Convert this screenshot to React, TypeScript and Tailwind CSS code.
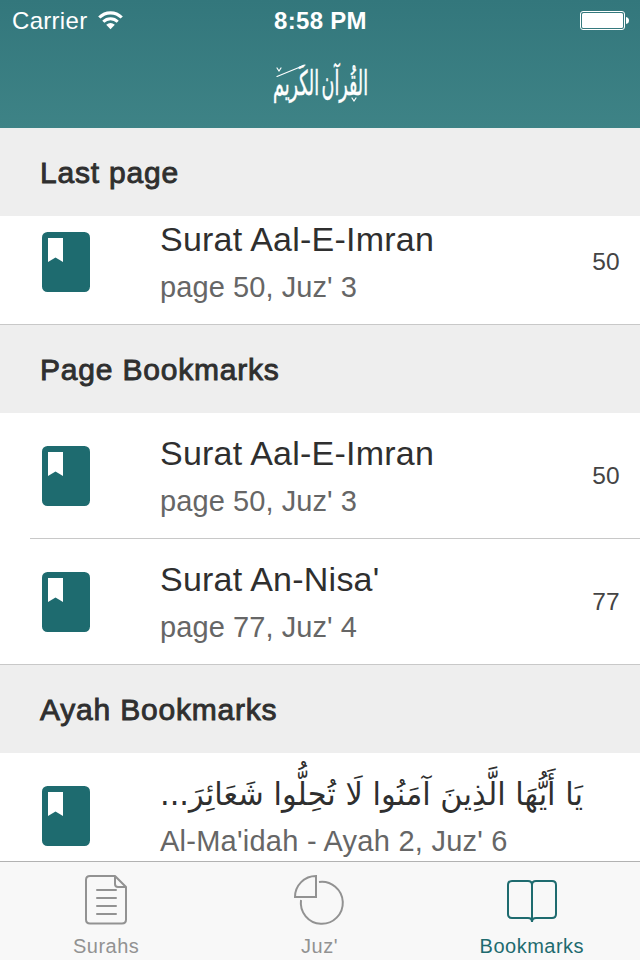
import type { ReactNode } from "react";

const SANS = "font-['Liberation_Sans',Arial,sans-serif]";

function StatusBar() {
  return (
    <div className="flex h-10 items-center justify-between pl-3 pr-[11px]">
      <div className="flex w-[200px] items-center gap-[11px]">
        <span className="pt-0.5 text-[24px] leading-[40px] tracking-[0.3px]">Carrier</span>
        <svg width="25" height="19" viewBox="0 0 25 19" fill="none" stroke="white">
          <path d="M1.3 6.5A15.7 15.7 0 0 1 23.7 6.5" strokeWidth="3.2" />
          <path d="M5.3 10.7A10.2 10.2 0 0 1 19.7 10.7" strokeWidth="3" />
          <path d="M8.2 13.8Q12.5 10.2 16.8 13.8L12.5 18.2Z" fill="white" stroke="none" />
        </svg>
      </div>
      <span className="pt-0.5 text-[24px] font-bold leading-[40px] tracking-[0.3px]">8:58 PM</span>
      <div className="flex w-[200px] justify-end">
        <svg width="49" height="19" viewBox="0 0 49 19" fill="none">
          <rect x="0.5" y="0.5" width="44" height="18" rx="2.5" stroke="white" />
          <rect x="2" y="2" width="41" height="15" rx="1.5" fill="white" />
          <path d="M46 6Q49 6.500 49 9.500Q49 12.500 46 13Z" fill="white" />
        </svg>
      </div>
    </div>
  );
}

function NavTitle() {
  return (
    <div className="flex h-[88px] justify-center">
      <svg width="120" height="72" viewBox="0 0 120 72" className="mt-[15px] overflow-visible" fill="white">
        <text
          x="108"
          y="40"
          direction="rtl"
          textLength="95"
          lengthAdjust="spacingAndGlyphs"
          wordSpacing="-6"
          stroke="white"
          strokeWidth="0.5"
          className="font-['DejaVu_Sans',sans-serif] text-[34px]"
        >
          القُرآن الكَريم
        </text>
        {/* ornamental marks around the lettering */}
        <g fill="none" stroke="white" strokeLinecap="round">
          <path d="M17 21.500L45 10" strokeWidth="1.2" />
          <path d="M17 13L19 16L21 13" strokeWidth="1.2" />
          <path d="M92 43L94 46L96 43" strokeWidth="1.2" />
        </g>
      </svg>
    </div>
  );
}

function SectionHeader({ children }: { children: ReactNode }) {
  return (
    <h2 className="h-[88px] bg-[#eeeeee] pl-10 pt-px text-[30px] font-normal leading-[88px] tracking-[0.8px] text-[#2f2f2f] [-webkit-text-stroke:0.9px_#2f2f2f]">
      {children}
    </h2>
  );
}

function BookIcon() {
  return (
    <svg width="48" height="60" viewBox="0 0 48 60" className="shrink-0">
      <rect width="48" height="60" rx="5.5" fill="#1e6b6f" />
      <path d="M6 6H21V30L13.500 25.500L6 30Z" fill="white" />
    </svg>
  );
}

function Row({ title, detail, page }: { title: string; detail: string; page: string }) {
  return (
    <div className="flex h-[125px] items-center pl-[42px] pr-5">
      <BookIcon />
      <div className="ml-[70px] flex-1">
        <div className="h-12 text-[34px] leading-[50px] tracking-[0.23px] text-[#2f2f2f]">{title}</div>
        <div className="h-12 text-[29px] leading-[51px] tracking-[0.08px] text-[#666666]">{detail}</div>
      </div>
      <span className="pt-0.5 text-[24.5px] tracking-[0.3px] text-[#444444]">{page}</span>
    </div>
  );
}

function Tab({ label, active, children }: { label: string; active?: boolean; children: ReactNode }) {
  return (
    <div className={`flex flex-col items-center ${active ? "pr-[3px] text-[#1e6b6f]" : "pr-px text-[#929292]"}`}>
      <svg width="56" height="56" viewBox="0 0 56 56" fill="none" stroke="currentColor" strokeWidth="2" className="mt-[11px]">
        {children}
      </svg>
      <span className="mt-[3px] text-[20px] leading-[28px] tracking-[0.5px]">{label}</span>
    </div>
  );
}

export default function App() {
  return (
    <div className={`flex h-[960px] w-[640px] flex-col overflow-hidden bg-white ${SANS}`}>
      <header className="h-32 shrink-0 bg-linear-to-b from-[#33777c] to-[#3e8386] text-white">
        <StatusBar />
        <NavTitle />
      </header>

      <main className="h-[733px] shrink-0 overflow-hidden">
        <SectionHeader>Last page</SectionHeader>
        <div className="flex h-[109px] items-end overflow-hidden border-b border-[#c8c8c8]">
          <div className="w-full">
            <Row title="Surat Aal-E-Imran" detail="page 50, Juz' 3" page="50" />
          </div>
        </div>
        <SectionHeader>Page Bookmarks</SectionHeader>
        <Row title="Surat Aal-E-Imran" detail="page 50, Juz' 3" page="50" />
        <div className="ml-[30px] h-px bg-[#c8c8c8]" />
        <Row title="Surat An-Nisa'" detail="page 77, Juz' 4" page="77" />
        <div className="h-px bg-[#c8c8c8]" />
        <SectionHeader>Ayah Bookmarks</SectionHeader>
        <div className="flex h-[125px] items-center pl-[42px] pr-5">
          <BookIcon />
          <div className="ml-[70px]">
            <svg width="424" height="48" viewBox="0 0 424 48" className="overflow-visible">
              <text
                x="423"
                y="37"
                direction="rtl"
                textLength="423"
                lengthAdjust="spacingAndGlyphs"
                fill="#2f2f2f"
                className="font-['DejaVu_Sans',sans-serif] text-[32px]"
              >
                يَا أَيُّهَا الَّذِينَ آمَنُوا لَا تُحِلُّوا شَعَائِرَ...
              </text>
            </svg>
            <div className="h-12 text-[29px] leading-[51px] tracking-[0.25px] text-[#666666]">
              Al-Ma'idah - Ayah 2, Juz' 6
            </div>
          </div>
        </div>
      </main>

      <nav className="grid h-[99px] shrink-0 grid-cols-3 border-t border-[#b2b2b2] bg-[#f8f8f8]">
        <Tab label="Surahs">
          <path d="M37 3H12Q8 3 8 7V46.500Q8 50.500 12 50.500H44Q48 50.500 48 46.500V14L37 3V11Q37 14 40 14H48M19 17H38M19 25H38M19 33H38M19 41H38" strokeLinejoin="round" strokeLinecap="round" />
        </Tab>
        <Tab label="Juz'">
          <path d="M25 3V24H4A21 21 0 0 1 25 3Z" />
          <path d="M28 9A21 21 0 1 1 10 27" />
        </Tab>
        <Tab label="Bookmarks" active>
          <path d="M28 12Q28 8 24 8H8Q4 8 4 12V41Q4 45 8 45H24Q28 45 28 49Q28 45 32 45H48Q52 45 52 41V12Q52 8 48 8H32Q28 8 28 12V49" />
        </Tab>
      </nav>
    </div>
  );
}
